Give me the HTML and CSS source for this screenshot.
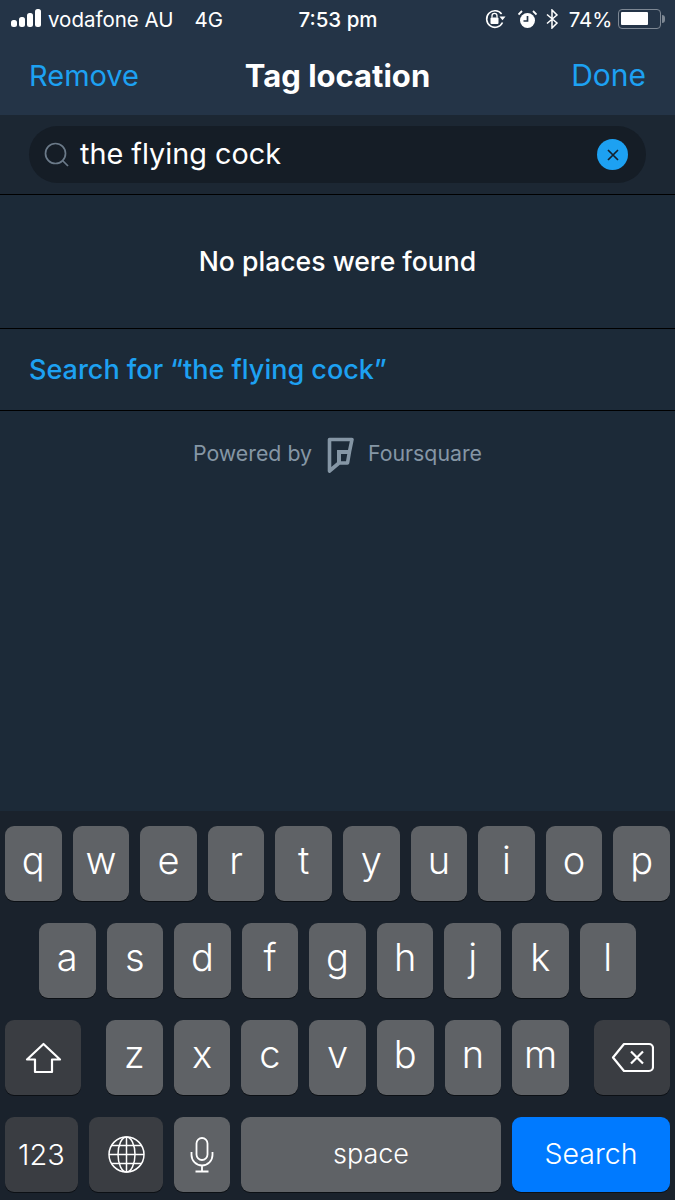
FILE: index.html
```html
<!DOCTYPE html>
<html lang="en">
<head>
<meta charset="utf-8">
<title>Tag location</title>
<link rel="stylesheet" href="styles.css">
</head>
<body>
<div class="screen">
  <header class="top">
    <div class="status">
      <div class="status-left">
        <svg class="signal" width="31" height="18" viewBox="0 0 31 18"><rect x="0" y="11" width="6" height="7" rx="2.5"/><rect x="8" y="8" width="6" height="10" rx="2.5"/><rect x="16" y="4" width="6" height="14" rx="2.5"/><rect x="24" y="0" width="6" height="18" rx="2.5"/></svg>
        <span class="carrier">vodafone AU</span>
        <span class="net">4G</span>
      </div>
      <div class="clock">7:53 pm</div>
      <div class="status-right">
        <svg class="ic-lock" width="21" height="20" viewBox="0 0 21 20"><path d="M17.500 13.500A8.300 8.300 0 1 1 16.600 5" fill="none" stroke="#fff" stroke-width="1.600"/><path d="M14.500 7.500h6l-3 3.800z" fill="#fff"/><rect x="5.500" y="8.500" width="8" height="6.500" rx="1" fill="#fff"/><path d="M7 8.800V6.800a2.500 2.500 0 0 1 5 0v2" fill="none" stroke="#fff" stroke-width="1.300"/></svg>
        <svg class="ic-alarm" width="19" height="19" viewBox="0 0 19 19"><circle cx="9.500" cy="10.500" r="7.500" fill="#fff"/><path d="M9.500 6v5H5.500" fill="none" stroke="#243447" stroke-width="1.700"/><path d="M0.500 4.500 4 1M18.500 4.500 15 1" stroke="#fff" stroke-width="1.800" fill="none"/></svg>
        <svg class="ic-bt" width="13" height="20" viewBox="0 0 13 20"><path d="M1 5.500 11 14l-5 5V1l5 5-10 8.500" fill="none" stroke="#fff" stroke-width="1.500"/></svg>
        <span class="pct">74%</span>
        <div class="battery"><div class="battery-fill"></div></div>
        <div class="battery-tip"></div>
      </div>
    </div>
    <nav class="nav">
      <span class="nav-btn">Remove</span>
      <span class="nav-title">Tag location</span>
      <span class="nav-btn">Done</span>
    </nav>
  </header>

  <section class="search-bar">
    <div class="pill">
      <svg class="ic-search" width="25" height="25" viewBox="0 0 25 25"><circle cx="11.500" cy="11.500" r="10" fill="none" stroke="#6b7a89" stroke-width="1.700"/><path d="M18.500 18.500 24 24" stroke="#6b7a89" stroke-width="1.700"/></svg>
      <span class="query">the flying cock</span>
      <span class="clear"><svg width="14" height="14" viewBox="0 0 14 14"><path d="M2 2l10 10M12 2 2 12" stroke="#14202c" stroke-width="1.700"/></svg></span>
    </div>
  </section>

  <div class="row-empty">No places were found</div>
  <div class="row-link">Search for “the flying cock”</div>

  <div class="powered">
    <span>Powered by</span>
    <svg class="fsq-logo" width="28" height="37" viewBox="0 0 28 37"><path d="M3.500 2.500H26L23.500 14.500 21.500 26H13L3.500 34z" fill="none" stroke="#8596a5" stroke-width="3.600" stroke-linejoin="round"/><path d="M13 26V15H24" fill="none" stroke="#8596a5" stroke-width="4"/></svg>
    <span>Foursquare</span>
  </div>

  <div class="spacer"></div>

  <div class="keyboard">
    <div class="kb-row">
      <div class="key">q</div><div class="key">w</div><div class="key">e</div><div class="key">r</div><div class="key">t</div><div class="key">y</div><div class="key">u</div><div class="key">i</div><div class="key">o</div><div class="key">p</div>
    </div>
    <div class="kb-row kb-row-2">
      <div class="key">a</div><div class="key">s</div><div class="key">d</div><div class="key">f</div><div class="key">g</div><div class="key">h</div><div class="key">j</div><div class="key">k</div><div class="key">l</div>
    </div>
    <div class="kb-row kb-row-3">
      <div class="key key-dark key-side"><svg width="37" height="32" viewBox="0 0 37 32"><path d="M18.500 2 35 17.500H27V30H10V17.500H2z" fill="none" stroke="#fff" stroke-width="2.200" stroke-linejoin="round"/></svg></div>
      <div class="letters">
        <div class="key">z</div><div class="key">x</div><div class="key">c</div><div class="key">v</div><div class="key">b</div><div class="key">n</div><div class="key">m</div>
      </div>
      <div class="key key-dark key-side"><svg width="43" height="31" viewBox="0 0 43 31"><path d="M13 2H38a4 4 0 0 1 4 4V25a4 4 0 0 1-4 4H13L2 15.500z" fill="none" stroke="#fff" stroke-width="2.200" stroke-linejoin="round"/><path d="M20 9.500 32 21.500M32 9.500 20 21.500" stroke="#fff" stroke-width="2.200"/></svg></div>
    </div>
    <div class="kb-row kb-row-4">
      <div class="key key-dark key-num">123</div>
      <div class="key key-dark key-globe"><svg width="37" height="37" viewBox="0 0 37 37" fill="none" stroke="#fff" stroke-width="1.500"><circle cx="18.500" cy="18.500" r="17.500"/><ellipse cx="18.500" cy="18.500" rx="8.500" ry="17.500"/><path d="M18.500 1v35M1 18.500h35M4 9.500h29M4 27.500h29"/></svg></div>
      <div class="key key-mic"><svg width="24" height="36" viewBox="0 0 24 36" fill="none" stroke="#fff" stroke-width="1.800"><rect x="6.500" y="1" width="11" height="22" rx="5.500"/><path d="M1.500 15v3a10.500 10.500 0 0 0 21 0v-3M12 28.500V34M5.500 34.500h13"/></svg></div>
      <div class="key key-space">space</div>
      <div class="key key-search">Search</div>
    </div>
  </div>
</div>
</body>
</html>
```
FILE: styles.css
```css
* { box-sizing: border-box; }
html, body { margin: 0; padding: 0; }
body { background: #1c2a38; font-family: Inter, "Liberation Sans", sans-serif; color: #fff; }
.screen { width: 675px; height: 1200px; display: flex; flex-direction: column; overflow: hidden; background: #1c2a38; }

.top { height: 115px; background: #243447; flex: none; }
.status { height: 38px; display: grid; grid-template-columns: 1fr auto 1fr; align-items: center; padding: 0 10px 0 11px; font-size: 20.500px; }
.status-left { display: flex; align-items: center; }
.signal { fill: #fff; margin-right: 6px; position: relative; top: -1px; }
.carrier { white-space: nowrap; }
.net { margin-left: 21px; }
.clock { font-weight: 500; font-size: 20.500px; }
.status-right { display: flex; align-items: center; justify-content: flex-end; }
.ic-alarm { margin-left: 12px; }
.ic-bt { margin-left: 9px; }
.pct { margin-left: 10px; font-size: 20.500px; }
.battery { width: 43px; height: 20px; margin-left: 5px; border: 1.500px solid #7d8793; border-radius: 4px; padding: 2px; }
.battery-fill { width: 27px; height: 13px; background: #fff; border-radius: 1px; }
.battery-tip { width: 3px; height: 8px; background: #7d8793; margin-left: 1.500px; border-radius: 0 3px 3px 0; }

.nav { height: 77px; padding: 0 29px 3px; display: grid; grid-template-columns: 1fr auto 1fr; align-items: center; font-size: 29px; }
.nav-btn { color: #1da1f2; }
.nav-btn:last-child { text-align: right; font-size: 30px; }
.nav-title { font-weight: 700; font-size: 31px; }

.search-bar { flex: none; height: 80px; padding: 11px 29px 0; background: #1c2733; border-bottom: 1px solid #000; }
.pill { height: 57px; background: #151d26; border-radius: 29px; display: flex; align-items: center; padding: 0 18px 0 15px; }
.ic-search { flex: none; }
.query { flex: 1; margin-left: 11px; font-size: 28.800px; padding-bottom: 3px; }
.clear { width: 31px; height: 31px; border-radius: 50%; background: #1da1f2; display: flex; align-items: center; justify-content: center; }

.row-empty { flex: none; height: 134px; display: flex; align-items: center; justify-content: center; font-size: 26.600px; font-weight: 500; padding-bottom: 2px; border-bottom: 1px solid #000; }
.row-link { flex: none; height: 82px; display: flex; align-items: center; padding: 0 29px; font-size: 27px; font-weight: 500; color: #1da1f2; border-bottom: 1px solid #000; }

.powered { flex: none; height: 86px; display: flex; align-items: center; justify-content: center; gap: 14px; font-size: 21.300px; color: #8596a5; padding-bottom: 2px; }
.fsq-logo { position: relative; top: 2px; }

.spacer { flex: 1; }

.keyboard { flex: none; height: 389px; padding-top: 15px; background: #1a222c; display: flex; flex-direction: column; gap: 22px; }
.kb-row { display: flex; gap: 11px; height: 75px; padding: 0 5px; }
.kb-row-2 { padding: 0 39px; }
.kb-row-3 { justify-content: space-between; }
.letters { display: flex; gap: 11px; width: 463px; }
.key { flex: 1; min-width: 0; background: #5f6266; border-radius: 9px; display: flex; align-items: center; justify-content: center; font-size: 38px; font-weight: 300; padding-bottom: 8px; box-shadow: 0 1px 0 #0c1015; }
.key-dark { background: #3a3d42; }
.key-side { flex: none; width: 76px; padding-bottom: 0; }
.key-num { flex: none; width: 73px; font-size: 29px; padding-bottom: 0; }
.key-globe { flex: none; width: 74px; padding-bottom: 0; }
.key-mic { flex: none; width: 56px; padding-bottom: 0; }
.key-space { flex: none; width: 260px; font-size: 27px; padding-bottom: 2px; }
.key-search { flex: none; width: 158px; background: #007aff; font-size: 28.500px; padding-bottom: 2px; }
```
